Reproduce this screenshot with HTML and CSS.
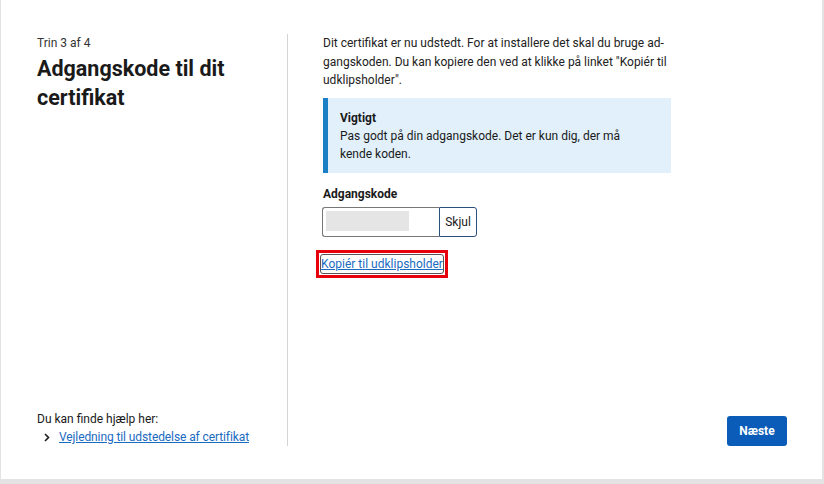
FILE: index.html
```html
<!DOCTYPE html>
<html lang="da">
<head>
  <meta charset="UTF-8" />
  <meta name="viewport" content="width=device-width, initial-scale=1.0"/>
  <title>Adgangskode til dit certifikat</title>
  <link rel="stylesheet" href="styles.css">
</head>
<body>

  <div class="card">

    <!-- Step info -->
    <div class="side">
      <div class="step">Trin 3 af 4</div>
      <h1>Adgangskode til dit certifikat</h1>

      <div class="help">
        <p>Du kan finde hjælp her:</p>
        <a href="#" class="help-link">
          <svg width="8" height="9" viewBox="0 0 8 9"><path d="M2 1l3.5 3.5L2 8" fill="none" stroke="#1a1a1a" stroke-width="1.6"/></svg>
          <span>Vejledning til udstedelse af certifikat</span>
        </a>
      </div>
    </div>

    <!-- Content -->
    <div class="main">
      <p class="intro">Dit certifikat er nu udstedt. For at installere det skal du bruge ad&shy;gangskoden. Du kan kopiere den ved at klikke på linket "Kopiér til udklipsholder".</p>

      <div class="notice">
        <strong>Vigtigt</strong>
        <p>Pas godt på din adgangskode. Det er kun dig, der må kende koden.</p>
      </div>

      <label class="label">Adgangskode</label>
      <div class="pw">
        <div class="pw-field"><span class="pw-mask"></span></div>
        <button class="pw-toggle">Skjul</button>
      </div>

      <div class="copy">
        <a href="#">Kopiér til udklipsholder</a>
      </div>

      <div class="actions">
        <button class="next">Næste</button>
      </div>
    </div>

  </div>

</body>
</html>
```

FILE: styles.css
```css
body {
  margin: 0;
  background-color: #e3e3e3;
  color: #1a1a1a;
  font-family: Roboto, "Noto Sans", sans-serif;
  font-size: 12px;
}
.card {
  background-color: #fff;
  margin-left: 1px;
  width: 821px;
  height: 479px;
  box-sizing: border-box;
  display: flex;
  padding: 34px 0 33px 36px;
}
.side {
  width: 250px;
  border-right: 1px solid #d4d4d4;
  display: flex;
  flex-direction: column;
}
.step {
  font-size: 12px;
  line-height: 18px;
  color: #333;
}
h1 {
  margin: 2px 0 0 0;
  font-size: 21.5px;
  line-height: 29px;
  font-weight: 700;
  width: 240px;
}
.help {
  margin-top: auto;
  padding-bottom: 0;
}
.help p {
  margin: 0;
  line-height: 17px;
}
.help-link {
  display: flex;
  align-items: center;
  gap: 8px;
  padding-left: 6px;
  color: #1a6bbf;
  line-height: 18px;
  letter-spacing: -0.1px;
}
.help-link span {
  text-decoration: underline;
}
.main {
  flex: 1;
  padding-left: 35px;
  padding-right: 35px;
  display: flex;
  flex-direction: column;
}
.intro {
  margin: 0;
  width: 345px;
  line-height: 18.5px;
  hyphens: manual;
  color: #222;
}
.notice {
  margin-top: 8px;
  width: 348px;
  box-sizing: border-box;
  background-color: #e1f0fa;
  border-left: 5px solid #1a7fc4;
  padding: 11px 12px 9px 12px;
}
.notice strong {
  display: block;
  line-height: 18px;
}
.notice p {
  margin: 0;
  width: 290px;
  line-height: 18.5px;
}
.label {
  margin-top: 12px;
  font-weight: 700;
  line-height: 18px;
}
.pw {
  display: flex;
  margin-top: 4px;
  margin-left: -1px;
  height: 30px;
}
.pw-field {
  width: 117px;
  box-sizing: border-box;
  border: 1px solid #777;
  border-right: none;
  border-radius: 3px 0 0 3px;
  padding: 3px;
}
.pw-mask {
  display: block;
  width: 83px;
  height: 20px;
  background-color: #e5e5e5;
}
.pw-toggle {
  width: 38px;
  border: 1px solid #2a4f7a;
  border-radius: 0 3px 3px 0;
  background-color: #fff;
  font-family: inherit;
  font-size: 12px;
  color: #1a1a1a;
  padding: 0;
}
.copy {
  margin-top: 13px;
  margin-left: -7px;
  width: 132px;
  height: 28px;
  box-sizing: border-box;
  border: 3px solid #e8000b;
  display: flex;
  align-items: center;
  justify-content: center;
  white-space: nowrap;
}
.copy a {
  color: #1a6bbf;
  font-size: 12px;
  outline: 1px solid #555;
  border-radius: 2px;
  line-height: 18px;
}
.actions {
  margin-top: auto;
  display: flex;
  justify-content: flex-end;
}
.next {
  width: 60px;
  height: 30px;
  border: none;
  border-radius: 3px;
  background-color: #0a5cb8;
  color: white;
  font-family: inherit;
  font-weight: 700;
  font-size: 12px;
  cursor: pointer;
}
```
